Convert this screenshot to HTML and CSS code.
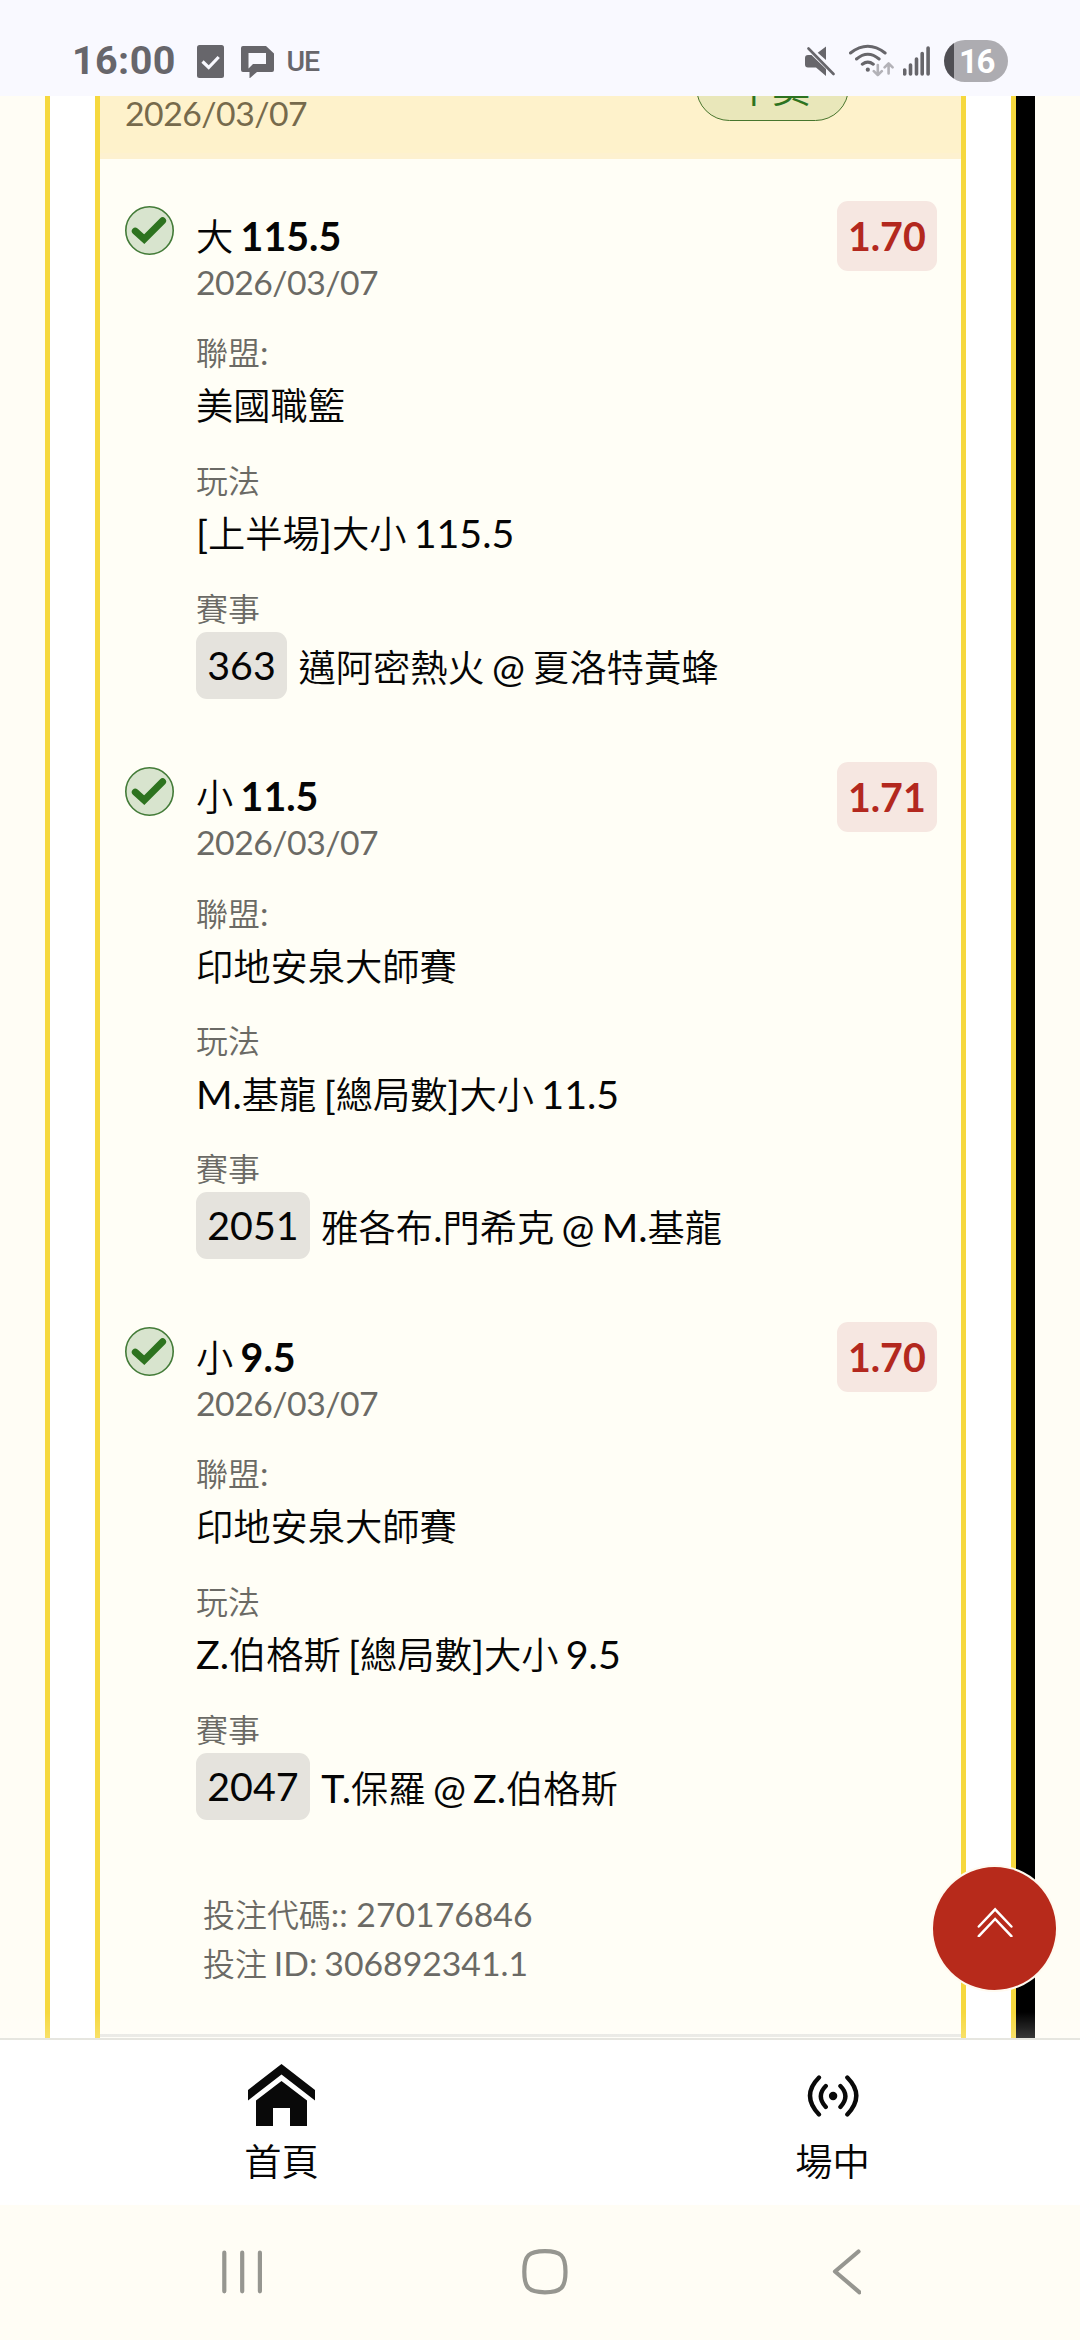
FILE: index.html
```html
<!DOCTYPE html>
<html lang="zh-TW">
<head>
<meta charset="utf-8">
<title>投注紀錄</title>
<link rel="stylesheet" href="styles.css">
</head>
<body>
<svg class="defs" width="0" height="0">
  <symbol id="win" viewBox="0 0 49 49">
    <circle cx="24.5" cy="24.5" r="23.7" fill="#d8e4ce" stroke="#437b38" stroke-width="1.6"/>
    <path d="M10.3 25.2 19.2 33.2 37.6 14.8" fill="none" stroke="#2d731f" stroke-width="7" stroke-linecap="round"/>
  </symbol>
</svg>
<header class="status">
  <span class="clock">16:00</span>
  <svg class="s-task" width="27" height="33" viewBox="197 45 27 33"><rect x="197" y="45" width="27" height="33" rx="2.5" fill="#67666b"/><path d="m202.500 61.500 6.200 6 10-10.500" fill="none" stroke="#f9f9ff" stroke-width="3.200"/></svg>
  <svg class="s-chat" width="33" height="32" viewBox="241 46 33 32"><path fill="#67666b" fill-rule="evenodd" d="M243 46h23l8 7.500V70q0 2-2 2h-15l-7.500 6.500V72H243q-2 0-2-2V48q0-2 2-2zM248.500 53v15.500l4.500-4.500h13V53z"/></svg>
  <span class="ue">UE</span>
  <svg class="s-mute" width="31" height="30" viewBox="804 46 31 30"><g fill="#67666b"><path d="M826 46.500v13.500l-8.300-7.200zM805 58q0-3 3-3h3.500L826 69v7l-10-8.500h-8q-3 0-3-3z"/><path d="m808.500 48.500 25 25.500" stroke="#67666b" stroke-width="2.600" stroke-linecap="round"/></g></svg>
  <svg class="s-wifi" width="46" height="36" viewBox="848 43 46 36"><g fill="none" stroke="#67666b" stroke-width="3" stroke-linecap="round"><path d="M850.500 53q17.300-13.500 34.600 0M856.500 59q11.300-9.500 22.600 0M862.300 64.200q5.500-4.200 11 0"/></g><circle cx="867.800" cy="69.700" r="2.100" fill="#67666b"/><path d="M877.800 65v10m-4-3.800 4 4 4-4M888.600 73.500v-10m-4 3.800 4-4 4 4" fill="none" stroke="#b3b2b8" stroke-width="2.600" stroke-linecap="round" stroke-linejoin="round"/></svg>
  <svg class="s-signal" width="28" height="30" viewBox="903 46 28 30"><path d="M904.700 70v4M910.500 65v9M916.500 59v15M922.200 53.500V74M928.100 48v26" stroke="#67666b" stroke-width="3.600" stroke-linecap="round"/></svg>
  <span class="battery">16</span>
</header>

<main class="view">
  <div class="outer"><div class="slip">
    <div class="slip-head">
      <span class="head-date">2026/03/07</span>
      <span class="pill">中獎</span>
    </div>

    <section class="bet">
      <svg class="mark" width="49" height="49"><use href="#win"/></svg>
      <div class="info">
        <div class="pick"><span class="c">大</span> <b>115.5</b></div>
        <div class="date">2026/03/07</div>
        <div class="field"><div class="label"><span class="c">聯盟</span>:</div><div class="value"><span class="c">美國職籃</span></div></div>
        <div class="field"><div class="label"><span class="c">玩法</span></div><div class="value">[<span class="c">上半場</span>]<span class="c">大小</span> 115.5</div></div>
        <div class="field"><div class="label"><span class="c">賽事</span></div><div class="match"><span class="chip">363</span><span class="teams"><span class="c">邁阿密熱火</span> @ <span class="c">夏洛特黃蜂</span></span></div></div>
      </div>
      <span class="odds">1.70</span>
    </section>

    <section class="bet">
      <svg class="mark" width="49" height="49"><use href="#win"/></svg>
      <div class="info">
        <div class="pick"><span class="c">小</span> <b>11.5</b></div>
        <div class="date">2026/03/07</div>
        <div class="field"><div class="label"><span class="c">聯盟</span>:</div><div class="value"><span class="c">印地安泉大師賽</span></div></div>
        <div class="field"><div class="label"><span class="c">玩法</span></div><div class="value">M.<span class="c">基龍</span> [<span class="c">總局數</span>]<span class="c">大小</span> 11.5</div></div>
        <div class="field"><div class="label"><span class="c">賽事</span></div><div class="match"><span class="chip">2051</span><span class="teams"><span class="c">雅各布</span>.<span class="c">門希克</span> @ M.<span class="c">基龍</span></span></div></div>
      </div>
      <span class="odds">1.71</span>
    </section>

    <section class="bet">
      <svg class="mark" width="49" height="49"><use href="#win"/></svg>
      <div class="info">
        <div class="pick"><span class="c">小</span> <b>9.5</b></div>
        <div class="date">2026/03/07</div>
        <div class="field"><div class="label"><span class="c">聯盟</span>:</div><div class="value"><span class="c">印地安泉大師賽</span></div></div>
        <div class="field"><div class="label"><span class="c">玩法</span></div><div class="value">Z.<span class="c">伯格斯</span> [<span class="c">總局數</span>]<span class="c">大小</span> 9.5</div></div>
        <div class="field"><div class="label"><span class="c">賽事</span></div><div class="match"><span class="chip">2047</span><span class="teams">T.<span class="c">保羅</span> @ Z.<span class="c">伯格斯</span></span></div></div>
      </div>
      <span class="odds">1.70</span>
    </section>

    <footer class="codes">
      <div><span class="c">投注代碼</span>:: 270176846</div>
      <div class="bet-id"><span class="c">投注</span> ID: 306892341.1</div>
    </footer>
  </div></div>
  <div class="rail"></div>
  <div class="fade"></div>
</main>

<nav class="tabs">
  <a class="tab"><svg width="67" height="62" viewBox="248 2064 67 62"><path fill="#090909" d="m281.500 2064 33.500 26v10.500l-33.500-26-33.500 26V2090zM281.500 2081l25.500 19.500v25.500h-17v-18h-17v18h-17v-25.500z"/></svg><span>首頁</span></a>
  <a class="tab"><svg width="52" height="62" viewBox="806.500 2064 52 62"><g fill="none" stroke="#090909" stroke-width="4.300" stroke-linecap="round"><path d="M818.500 2077.500q-18 18 0 37M846.800 2077.500q18 18 0 37M825.300 2086q-10 10 0 21M839.900 2086q10 10 0 21"/></g><circle cx="832.600" cy="2096" r="4.200" fill="#090909"/></svg><span>場中</span></a>
</nav>
<div class="system">
  <svg class="sys-recent" width="41" height="46" viewBox="222 2249 41 46"><path d="M224.300 2252.700v38.600M242.200 2252.700v38.600M259.900 2252.700v38.600"/></svg>
  <svg class="sys-home" width="46" height="46" viewBox="521.500 2249 46 46"><path d="M544.400 2251.200C560.500 2251.200 565 2255.500 565 2271.700S560.500 2292.300 544.400 2292.300 523.800 2288 523.800 2271.700 528.300 2251.200 544.400 2251.200z"/></svg>
  <svg class="sys-back" width="29" height="46" viewBox="832 2249 29 46"><path d="m858.500 2251.500-23.500 20 24.500 20.800"/></svg>
</div>
<button class="top" aria-label="回到頂部"><svg width="38" height="32" viewBox="975.500 1904 38 32"><path d="m978.300 1925.500 16.300-17.200 16.300 17.200M978.300 1935.200l16.300-17.200 16.300 17.200"/></svg></button>
</body>
</html>
```
FILE: styles.css
```css
* { box-sizing: border-box; }
body {
  margin: 0;
  width: 1080px;
  height: 2340px;
  overflow: hidden;
  position: relative;
  display: flex;
  flex-direction: column;
  background: #fffdf5;
  color: #050505;
  font-family: Lato, "Noto Sans CJK TC", sans-serif;
  font-size: 39.375px;
}
svg { display: block; flex: none; }
.defs { position: absolute; }
.c {
  font-family: "Noto Sans CJK TC", sans-serif;
  font-size: .947em;
  font-weight: 350;
  line-height: 0;
}

/* status bar */
.status {
  flex: none;
  height: 96px;
  padding: 40px 72px 14px;
  display: flex;
  align-items: flex-start;
  background: #f9f9ff;
  color: #67666b;
  font-family: Roboto, sans-serif;
}
.clock { width: 125px; font-size: 39.500px; font-weight: 700; line-height: 42px; letter-spacing: .4px; white-space: nowrap; }
.s-task { margin-top: 5px; }
.s-chat { margin: 6px 0 0 17px; }
.ue { margin: 5px 0 0 12.500px; width: 518px; font-size: 28.500px; font-weight: 500; line-height: 33px; letter-spacing: -1px; }
.s-mute { margin-top: 6px; }
.s-wifi { margin: 3px 0 0 13px; }
.s-signal { margin: 6px 0 0 9px; }
.battery {
  flex: none;
  margin-left: 13px;
  width: 64px;
  height: 42px;
  padding-left: 15px;
  border-radius: 21px;
  background: linear-gradient(90deg, #504f54 10px, #adacb1 10px);
  color: #fff;
  font-size: 33px;
  font-weight: 700;
  line-height: 43px;
  letter-spacing: -1.500px;
}

/* scrolled bet slip */
.view {
  flex: none;
  position: relative;
  height: 1942px;
  padding-left: 45px;
  display: flex;
  overflow: hidden;
}
.outer {
  width: 971px;
  padding: 0 45px;
  border: solid #f6d83e;
  border-width: 0 5px;
  background: #fff;
}
.slip {
  height: 1942px;
  border: solid #f6d83e;
  border-width: 0 5px;
  background: #fffef6;
}
.rail { width: 19px; background: #000; }
.fade {
  position: absolute;
  left: 0;
  right: 0;
  bottom: 0;
  height: 26px;
  background: linear-gradient(rgba(255,255,255,0), rgba(255,255,255,.22));
}
.slip-head {
  height: 63px;
  padding: 0 112px 0 25px;
  display: flex;
  justify-content: space-between;
  align-items: flex-start;
  background: linear-gradient(#fef2cb 57px, #fdf1d0 57px);
}
.head-date { color: #766a4c; font-size: 33.750px; line-height: 35px; letter-spacing: -.5px; }
.pill {
  margin-top: -42px;
  width: 153px;
  height: 67px;
  border: 1.500px solid #47752c;
  border-radius: 34px;
  background: #e9e7ba;
  color: #2d731f;
  font-family: "Noto Sans CJK TC", sans-serif;
  font-size: 37.300px;
  line-height: 64px;
  text-align: center;
}
.bet {
  height: 560.500px;
  padding: 42px 24px 0 25px;
  display: grid;
  grid-template-columns: 49px 1fr auto;
  column-gap: 22px;
  align-items: start;
}
.mark { margin-top: 5px; }
.info { padding-top: 10.500px; white-space: nowrap; word-spacing: -2.800px; }
.pick { line-height: 48px; }
.date { color: #6b6a65; font-size: 33.750px; line-height: 44px; letter-spacing: -.5px; }
.field { margin-top: 28.500px; }
.label { color: #6b6a65; font-size: 33.750px; line-height: 40px; }
.value { margin-top: 7.300px; line-height: 52px; }
.match { margin-top: 4.200px; display: flex; gap: 11.500px; line-height: 67px; }
.chip { height: 67px; padding: 0 11.250px; border-radius: 11px; background: #e5e3dd; line-height: 65px; }
.teams { padding-top: 1px; }
.odds {
  padding: 0 11.250px;
  height: 70px;
  border-radius: 11px;
  background: #f6e7e1;
  color: #b3281e;
  font-weight: 700;
  line-height: 69px;
}
.codes {
  height: 196px;
  padding: 49px 0 0 103px;
  border-bottom: 3px solid #e6e6e1;
  color: #6b6a65;
  font-size: 33.750px;
  line-height: 49px;
}
.bet-id { word-spacing: -1.700px; }

/* bottom tabs */
.tabs {
  flex: none;
  height: 167px;
  padding: 24px 0 0 6px;
  border-top: 2px solid #e6e6e0;
  display: grid;
  grid-template-columns: 551px 551px;
  background: #fff;
}
.tab {
  display: flex;
  flex-direction: column;
  align-items: center;
  gap: 6px;
  font-family: "Noto Sans CJK TC", sans-serif;
  font-size: 37.300px;
  font-weight: 350;
  line-height: 56px;
}

/* system navigation */
.system { flex: 1; padding: 44px 0 0 222px; display: flex; align-items: flex-start; }
.system path { fill: none; stroke: #969690; stroke-width: 4.200; stroke-linecap: round; stroke-linejoin: round; }
.sys-home { margin-left: 258.500px; }
.sys-back { margin-left: 264.500px; }

/* floating back-to-top button */
.top {
  position: absolute;
  left: 933px;
  top: 1867px;
  width: 123px;
  height: 123px;
  padding: 0 0 15px;
  border: 0;
  border-radius: 50%;
  background: #b72a1b;
  box-shadow: 0 0 0 2px #fffaf0;
  display: flex;
  align-items: center;
  justify-content: center;
}
.top path { fill: none; stroke: #fff; stroke-width: 2.500; stroke-linecap: round; }
```
